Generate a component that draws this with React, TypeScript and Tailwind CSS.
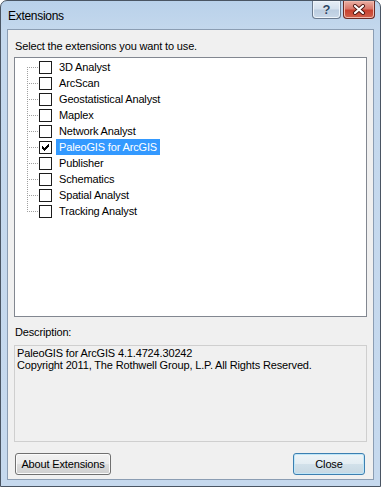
import React from 'react'

const extensions = [
  '3D Analyst',
  'ArcScan',
  'Geostatistical Analyst',
  'Maplex',
  'Network Analyst',
  'PaleoGIS for ArcGIS',
  'Publisher',
  'Schematics',
  'Spatial Analyst',
  'Tracking Analyst',
]

const checkedName = 'PaleoGIS for ArcGIS'

function CheckBox({ checked }: { checked: boolean }) {
  // classic 7x7 pixel check mark
  const tops = [2, 3, 4, 3, 2, 1, 0]
  return (
    <div className="mt-[2px] h-[13px] w-[13px] shrink-0 border border-[#1c1c1c] bg-white">
      {checked && (
        <svg width="11" height="11" viewBox="0 0 11 11" shapeRendering="crispEdges">
          {tops.map((t, i) => (
            <rect key={i} x={2 + i} y={2 + t} width="1" height="3" fill="#000" />
          ))}
        </svg>
      )}
    </div>
  )
}

function TreeLines({ rows }: { rows: number }) {
  const last = (rows - 1) * 16 + 8
  return (
    <svg width="12" height={rows * 16} className="shrink-0" shapeRendering="crispEdges">
      <line x1="0.5" y1="8" x2="0.5" y2={last + 1} stroke="#a0a0a0" strokeDasharray="1 1" />
      {Array.from({ length: rows }).map((_, i) => (
        <line
          key={i}
          x1="2"
          y1={i * 16 + 8.5}
          x2="12"
          y2={i * 16 + 8.5}
          stroke="#a0a0a0"
          strokeDasharray="1 1"
        />
      ))}
    </svg>
  )
}

function WinButton({ label, isDefault }: { label: string; isDefault?: boolean }) {
  return (
    <button
      className={
        isDefault
          ? 'h-[22px] w-[72px] rounded-[3px] border border-[#3c7fb1] bg-[linear-gradient(to_bottom,#eef4f8_0%,#e3edf3_50%,#d2e1ea_50%,#c7d8e3_100%)] text-black shadow-[inset_0_0_0_1px_#bfe6f8]'
          : 'h-[22px] w-[96px] rounded-[3px] border border-[#707070] bg-[linear-gradient(to_bottom,#f2f2f2_0%,#ebebeb_50%,#dddddd_50%,#cfcfcf_100%)] text-black shadow-[inset_0_0_0_1px_#fbfbfb]'
      }
    >
      {label}
    </button>
  )
}

export default function App() {
  return (
    <div className="h-[487px] w-[381px] bg-white font-['Liberation_Sans',Arial,sans-serif] text-[11px] tracking-[-0.15px] text-black">
      <div className="flex h-full w-full flex-col rounded-t-[7px] border border-[#4a5563] bg-[linear-gradient(to_bottom,#b9d1ea_0px,#c4d8ed_30px,#c6d9ee_100%)]">
        {/* title bar */}
        <div className="flex h-[28px] shrink-0 items-start justify-between">
          <div className="pl-[7px] pt-[6px] text-[12px] tracking-[-0.3px] text-black">Extensions</div>
          <div className="flex gap-[2px] pr-[5px]">
            <div className="flex h-[18px] w-[29px] items-center justify-center rounded-b-[4px] border border-t-0 border-[#6a7a8e] bg-[linear-gradient(to_bottom,#e6eef6_0%,#d5e1ee_45%,#bccde0_55%,#c9d8e8_100%)] shadow-[inset_0_0_0_1px_#eef4fa]">
              <span className="text-[13px] font-bold leading-none text-[#2c4564] [text-shadow:0_0_1px_#fff]">?</span>
            </div>
            <div className="flex h-[18px] w-[32px] items-center justify-center rounded-b-[4px] border border-t-0 border-[#6b2b25] bg-[linear-gradient(to_bottom,#eab1a5_0%,#d9776a_45%,#c8412f_55%,#d0614c_100%)] shadow-[inset_0_0_0_1px_#f2b9ad]">
              <svg width="14" height="11" viewBox="0 0 14 11">
                <path d="M3 2 L11 9 M11 2 L3 9" stroke="#4b1510" strokeWidth="4" strokeLinecap="round" />
                <path d="M3 2 L11 9 M11 2 L3 9" stroke="#fff" strokeWidth="2.2" strokeLinecap="round" />
              </svg>
            </div>
          </div>
        </div>

        {/* client area */}
        <div className="mx-[6px] mb-[6px] flex flex-1 flex-col border border-[#8b9db3] bg-[#f0f0f0]">
          <div className="pl-[7px] pt-[10px] leading-[13px]">Select the extensions you want to use.</div>

          <div className="ml-[6px] mt-[4px] h-[260px] w-[353px] border border-[#828790] bg-white pt-[1px]">
            <div className="flex pl-[12px]">
              <TreeLines rows={extensions.length} />
              <div className="flex flex-col">
                {extensions.map((name) => {
                  const selected = name === checkedName
                  return (
                    <div key={name} className="flex h-[16px] items-start">
                      <CheckBox checked={selected} />
                      <span
                        className={
                          selected
                            ? 'ml-[4px] h-[16px] bg-[#3399ff] pl-[3px] pr-[3px] leading-[16px] text-white'
                            : 'ml-[4px] h-[16px] pl-[3px] pr-[3px] leading-[16px]'
                        }
                      >
                        {name}
                      </span>
                    </div>
                  )
                })}
              </div>
            </div>
          </div>

          <div className="mt-[9px] pl-[7px] leading-[13px]">Description:</div>

          <div className="ml-[6px] mt-[6px] h-[97px] w-[353px] border border-[#cfcfcf] bg-[#f0f0f0] pl-[2px] pt-[1px] leading-[12px]">
            <div>PaleoGIS for ArcGIS 4.1.4724.30242</div>
            <div>Copyright 2011, The Rothwell Group, L.P. All Rights Reserved.</div>
          </div>

          <div className="mt-[11px] flex justify-between pl-[7px] pr-[8px]">
            <WinButton label="About Extensions" />
            <WinButton label="Close" isDefault />
          </div>
        </div>
      </div>
    </div>
  )
}
